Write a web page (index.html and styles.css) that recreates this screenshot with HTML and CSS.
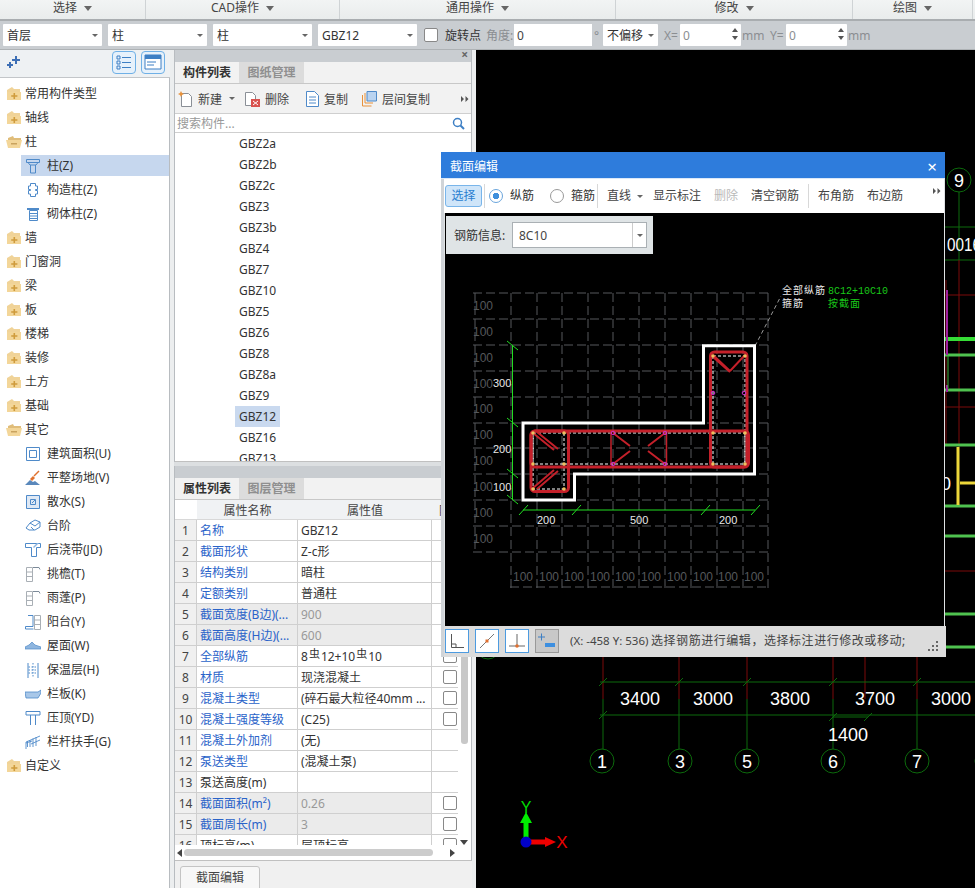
FILE: index.html
```html
<!DOCTYPE html>
<html lang="zh-CN">
<head>
<meta charset="utf-8">
<title>截面编辑</title>
<link rel="stylesheet" href="styles.css">
</head>
<body>
<svg class="defs" width="0" height="0" aria-hidden="true">
  <defs>
    <symbol id="folder" viewBox="0 0 16 16"><path d="M1 4l5-3 2 2h6v11H1z" fill="#f0d398"/><path d="M1 6h14v8H1z" fill="#f3d699"/><path d="M7.500 7h1.600v2.300h2.300v1.500H9.100v2.300H7.500v-2.300H5.200V9.300h2.300z" fill="#cf9b3c"/></symbol>
    <symbol id="folder-open" viewBox="0 0 16 16"><path d="M2 4l5-2 1 2h7v4H2z" fill="#e0bd7a"/><path d="M0 6h16l-2 8H2z" fill="#f3d699"/><path d="M5 9h6v1.500H5z" fill="#c9a35e"/></symbol>
    <symbol id="i-col" viewBox="0 0 16 16"><path d="M1.500 1.500h13v3h-13zM3 4.500l2 2.500h6l2-2.500M5.500 7v8h5V7" fill="none" stroke="#4f8ac9"/></symbol>
    <symbol id="i-gz" viewBox="0 0 16 16"><path d="M5.500 1.500h5v2.500h2v3.500h-2v1h2v3.500h-2v2.500h-5V12h-2V8.500h2v-1h-2V4h2z" fill="none" stroke="#4f8ac9"/></symbol>
    <symbol id="i-qt" viewBox="0 0 16 16"><path d="M2 2h12v2H2z" fill="#4f8ac9"/><path d="M4.500 4.500h8v10h-8zM4.500 7.500h8M4.500 10h8M4.500 12.500h8" fill="none" stroke="#4f8ac9"/></symbol>
    <symbol id="i-area" viewBox="0 0 16 16"><path d="M1.500 1.500h13v13h-13zM4.500 4.500h7v7h-7z" fill="none" stroke="#4f8ac9"/></symbol>
    <symbol id="i-site" viewBox="0 0 16 16"><path d="M0 15l5-5 3 2 2-1 5 4z" fill="#5a88bb"/><path d="M5 9l3-3 2 2-3 3z" fill="#e0712e"/><path d="M9 6l5-5" stroke="#e0712e" stroke-width="1.400"/></symbol>
    <symbol id="i-water" viewBox="0 0 16 16"><path d="M1.500 1.500h13v13h-13z" fill="#dfe9f5" stroke="#4f8ac9"/><path d="M5.500 5.500h5v5h-5zM10 6l-3 3" fill="none" stroke="#4f8ac9"/></symbol>
    <symbol id="i-step" viewBox="0 0 16 16"><path d="M1 10l4-5 5-3 5 2v5l-5 3H4zM5 5l5 3 5-4M6 9l3 3" fill="none" stroke="#4f8ac9"/></symbol>
    <symbol id="i-hj" viewBox="0 0 16 16"><path d="M.5 1.500h15v4h-4v9h-5v-9h-6z" fill="none" stroke="#4f8ac9"/><path d="M8 5l4-4h2L9 6z" fill="#8db5e0"/></symbol>
    <symbol id="i-eave" viewBox="0 0 16 16"><path d="M1.500 1.500h6v14h-6zM1.500 6h6M1.500 10.500h6" fill="none" stroke="#a9afb5"/><path d="M8 1.500h6l1 2" fill="none" stroke="#7c8a99"/></symbol>
    <symbol id="i-bal" viewBox="0 0 16 16"><path d="M9.500 1.500h6v14h-6zM9.500 6h6M9.500 10.500h6" fill="none" stroke="#a9afb5"/><path d="M3 1.500h5v11H.5v2.500h8" fill="none" stroke="#4f8ac9"/></symbol>
    <symbol id="i-roof" viewBox="0 0 16 16"><path d="M0 9l4-2 3-3 3 3 6 2v2H0z" fill="#8fb6df" stroke="#4f8ac9" stroke-width=".7"/></symbol>
    <symbol id="i-ins" viewBox="0 0 16 16"><path d="M3 1v15M13 1v15" stroke="#4f8ac9"/><path d="M8 1v15M3.500 5h9M3.500 8h9M3.500 11h9" stroke="#4f8ac9" stroke-dasharray="1.500 1.500"/></symbol>
    <symbol id="i-pan" viewBox="0 0 16 16"><path d="M0 6h13l3-2v3l-3 5H1z" fill="#a8c7e8" stroke="#4f8ac9" stroke-width=".8"/></symbol>
    <symbol id="i-top" viewBox="0 0 16 16"><path d="M1 1.500h14v3.500H1z" fill="none" stroke="#4f8ac9"/><path d="M5.500 5v10M10.500 5v10" stroke="#4f8ac9"/></symbol>
    <symbol id="i-rail" viewBox="0 0 16 16"><path d="M1 15V8l14-6M2.500 13V7M5 13V6M8 13V4.500M11 12V3M1 9l6-2M6 10l9-4" fill="none" stroke="#4f8ac9" stroke-width=".9"/></symbol>
    <symbol id="more-arrows" viewBox="0 0 8 8"><path d="M0 1l3 3-3 3zM4.500 1l3 3-3 3z" fill="#555"/></symbol>
  </defs>
</svg>

<div class="app">
  <nav class="menubar">
    <div class="menu-cell">选择<span class="caret"></span></div>
    <div class="menu-cell">CAD操作<span class="caret"></span></div>
    <div class="menu-cell">通用操作<span class="caret"></span></div>
    <div class="menu-cell">修改<span class="caret"></span></div>
    <div class="menu-cell">绘图<span class="caret"></span></div>
  </nav>

  <div class="toolbar">
    <div class="combo">首层<span class="caret small"></span></div>
    <div class="combo">柱<span class="caret small"></span></div>
    <div class="combo">柱<span class="caret small"></span></div>
    <div class="combo">GBZ12<span class="caret small"></span></div>
    <span class="check tool-check"></span>
    <span class="tool-label dark">旋转点</span>
    <span class="tool-label faded gap-angle">角度:</span>
    <div class="field angle">0</div>
    <span class="tool-label faded degree">°</span>
    <div class="combo offset">不偏移<span class="caret small"></span></div>
    <span class="tool-label faded gap-xy">X=</span>
    <div class="field spin faded">0<span class="spin-arrows"><i></i><i></i></span></div>
    <span class="tool-label faded gap-mm">mm</span>
    <span class="tool-label faded gap-xy2">Y=</span>
    <div class="field spin faded">0<span class="spin-arrows"><i></i><i></i></span></div>
    <span class="tool-label faded gap-mm">mm</span>
  </div>

  <main class="workspace">
    <aside class="tree-pane">
      <div class="tree-head">
        <svg class="spark" width="13" height="13" viewBox="0 0 13 13"><path d="M8 0h2v3h3v2h-3v3H8V5H5V3h3zM2 6h2v2h2v2H4v2H2v-2H0V8h2z" fill="#3d6fb5"/></svg>
        <span class="view-btns">
          <span class="view-btn"><svg width="16" height="16" viewBox="0 0 16 16"><path d="M1 2h3v3H1zM1 7h3v3H1zM1 12h3v3H1zM6 3.500h9M6 8.500h9M6 13.500h9" fill="none" stroke="#3d7fc4"/></svg></span>
          <span class="view-btn"><svg width="18" height="16" viewBox="0 0 18 16"><path d="M1 1h16v14H1z" fill="#fff" stroke="#3d7fc4"/><path d="M1 1h16v4H1z" fill="#3d7fc4"/><path d="M3 8h9M3 11h7" stroke="#3d7fc4"/></svg></span>
        </span>
      </div>
      <ul class="tree">
        <li class="node"><svg class="ficon"><use href="#folder"/></svg>常用构件类型</li>
        <li class="node"><svg class="ficon"><use href="#folder"/></svg>轴线</li>
        <li class="node"><svg class="ficon"><use href="#folder-open"/></svg>柱</li>
        <li class="leaf selected"><svg class="icon"><use href="#i-col"/></svg>柱(Z)</li>
        <li class="leaf"><svg class="icon"><use href="#i-gz"/></svg>构造柱(Z)</li>
        <li class="leaf"><svg class="icon"><use href="#i-qt"/></svg>砌体柱(Z)</li>
        <li class="node"><svg class="ficon"><use href="#folder"/></svg>墙</li>
        <li class="node"><svg class="ficon"><use href="#folder"/></svg>门窗洞</li>
        <li class="node"><svg class="ficon"><use href="#folder"/></svg>梁</li>
        <li class="node"><svg class="ficon"><use href="#folder"/></svg>板</li>
        <li class="node"><svg class="ficon"><use href="#folder"/></svg>楼梯</li>
        <li class="node"><svg class="ficon"><use href="#folder"/></svg>装修</li>
        <li class="node"><svg class="ficon"><use href="#folder"/></svg>土方</li>
        <li class="node"><svg class="ficon"><use href="#folder"/></svg>基础</li>
        <li class="node"><svg class="ficon"><use href="#folder-open"/></svg>其它</li>
        <li class="leaf"><svg class="icon"><use href="#i-area"/></svg>建筑面积(U)</li>
        <li class="leaf"><svg class="icon"><use href="#i-site"/></svg>平整场地(V)</li>
        <li class="leaf"><svg class="icon"><use href="#i-water"/></svg>散水(S)</li>
        <li class="leaf"><svg class="icon"><use href="#i-step"/></svg>台阶</li>
        <li class="leaf"><svg class="icon"><use href="#i-hj"/></svg>后浇带(JD)</li>
        <li class="leaf"><svg class="icon"><use href="#i-eave"/></svg>挑檐(T)</li>
        <li class="leaf"><svg class="icon"><use href="#i-eave"/></svg>雨蓬(P)</li>
        <li class="leaf"><svg class="icon"><use href="#i-bal"/></svg>阳台(Y)</li>
        <li class="leaf"><svg class="icon"><use href="#i-roof"/></svg>屋面(W)</li>
        <li class="leaf"><svg class="icon"><use href="#i-ins"/></svg>保温层(H)</li>
        <li class="leaf"><svg class="icon"><use href="#i-pan"/></svg>栏板(K)</li>
        <li class="leaf"><svg class="icon"><use href="#i-top"/></svg>压顶(YD)</li>
        <li class="leaf"><svg class="icon"><use href="#i-rail"/></svg>栏杆扶手(G)</li>
        <li class="node"><svg class="ficon"><use href="#folder"/></svg>自定义</li>
      </ul>
    </aside>

    <section class="side-pane">
      <div class="pane-top">
        <div class="strip"><span class="strip-x">×</span></div>
        <div class="tabs"><span class="tab active">构件列表</span><span class="tab">图纸管理</span></div>
        <div class="list-tools">
          <svg class="tool-icon" width="15" height="16" viewBox="0 0 15 16"><path d="M3.500 2.500h7l3 3v10h-10z" fill="#fff" stroke="#8a8f96"/><path d="M3 0l1 2 2 1-2 1-1 2-1-2-2-1 2-1z" fill="#e8913a"/></svg>
          <span class="lt lt-new">新建</span><span class="caret small lt-caret"></span>
          <svg class="tool-icon lt-del" width="15" height="16" viewBox="0 0 15 16"><path d="M.5 1.500h7l3 3v10H.5z" fill="#fff" stroke="#8a8f96"/><path d="M6 8h9v8H6z" fill="#d9534f"/><path d="M8 10l5 4M13 10l-5 4" stroke="#fff"/></svg>
          <span class="lt">删除</span>
          <svg class="tool-icon lt-copy" width="13" height="16" viewBox="0 0 13 16"><path d="M.5.500h8l4 4v11H.5z" fill="#fff" stroke="#4f8ac9"/><path d="M3 6h7M3 9h7M3 12h7" stroke="#4f8ac9"/></svg>
          <span class="lt">复制</span>
          <svg class="tool-icon lt-layer" width="15" height="16" viewBox="0 0 15 16"><path d="M.500 4v11h9" fill="none" stroke="#e8913a"/><path d="M3 2v10h8" fill="none" stroke="#e8913a"/><path d="M5 .500h9.500v9.500H5z" fill="#b9d3f0" stroke="#4f8ac9"/></svg>
          <span class="lt">层间复制</span>
          <svg class="more list-more" width="8" height="8"><use href="#more-arrows"/></svg>
        </div>
        <div class="search">
          <span>搜索构件...</span>
          <svg width="13" height="13" viewBox="0 0 13 13"><circle cx="5.500" cy="5.500" r="4" fill="none" stroke="#3d7fc4" stroke-width="1.500"/><path d="M8.500 8.500l3.500 3.500" stroke="#3d7fc4" stroke-width="2"/></svg>
        </div>
        <ul class="comp-list">
          <li>GBZ2a</li><li>GBZ2b</li><li>GBZ2c</li><li>GBZ3</li><li>GBZ3b</li><li>GBZ4</li><li>GBZ7</li><li>GBZ10</li>
          <li>GBZ5</li><li>GBZ6</li><li>GBZ8</li><li>GBZ8a</li><li>GBZ9</li><li class="picked">GBZ12</li><li>GBZ16</li><li>GBZ13</li>
        </ul>
      </div>

      <div class="splitter"></div>

      <div class="pane-bottom">
        <div class="strip"></div>
        <div class="tabs tabs-low"><span class="tab active">属性列表</span><span class="tab">图层管理</span></div>
        <div class="table-wrap">
          <table class="props">
            <colgroup><col class="c-num"><col class="c-name"><col class="c-val"><col class="c-chk"></colgroup>
            <thead><tr><th class="blank"></th><th>属性名称</th><th>属性值</th><th class="extra">附加</th></tr></thead>
            <tbody>
              <tr><td class="n">1</td><td class="k">名称</td><td>GBZ12</td><td></td></tr>
              <tr><td class="n">2</td><td class="k">截面形状</td><td>Z-c形</td><td></td></tr>
              <tr><td class="n">3</td><td class="k">结构类别</td><td>暗柱</td><td></td></tr>
              <tr><td class="n">4</td><td class="k">定额类别</td><td>普通柱</td><td></td></tr>
              <tr class="off"><td class="n">5</td><td class="k">截面宽度(B边)(...</td><td>900</td><td></td></tr>
              <tr class="off"><td class="n">6</td><td class="k">截面高度(H边)(...</td><td>600</td><td></td></tr>
              <tr><td class="n">7</td><td class="k">全部纵筋</td><td>8<span class="bar-sym">虫</span>12+10<span class="bar-sym">虫</span>10</td><td class="cc"><span class="check"></span></td></tr>
              <tr><td class="n">8</td><td class="k">材质</td><td>现浇混凝土</td><td class="cc"><span class="check"></span></td></tr>
              <tr><td class="n">9</td><td class="k">混凝土类型</td><td>(碎石最大粒径40mm ...</td><td class="cc"><span class="check"></span></td></tr>
              <tr><td class="n">10</td><td class="k">混凝土强度等级</td><td>(C25)</td><td class="cc"><span class="check"></span></td></tr>
              <tr><td class="n">11</td><td class="k">混凝土外加剂</td><td>(无)</td><td></td></tr>
              <tr><td class="n">12</td><td class="k">泵送类型</td><td>(混凝土泵)</td><td></td></tr>
              <tr><td class="n">13</td><td class="plain">泵送高度(m)</td><td></td><td></td></tr>
              <tr class="off"><td class="n">14</td><td class="k">截面面积(m²)</td><td>0.26</td><td class="cc"><span class="check"></span></td></tr>
              <tr class="off"><td class="n">15</td><td class="k">截面周长(m)</td><td>3</td><td class="cc"><span class="check"></span></td></tr>
              <tr><td class="n">16</td><td class="plain">顶标高(m)</td><td>层顶标高</td><td class="cc"><span class="check"></span></td></tr>
            </tbody>
          </table>
          <div class="vthumb"></div>
          <span class="vdown"></span>
        </div>
        <div class="hscroll"><span class="h-left"></span><span class="hthumb"></span><span class="h-right"></span></div>
        <div class="pane-actions"><span class="action-btn">截面编辑</span></div>
      </div>
    </section>

    <section class="canvas">
      <svg class="cad" width="499" height="838" viewBox="476 50 499 838">
        <!-- right side fragments of the plan -->
        <path d="M945 227H975M945 260H975" stroke="#0c6a0c"/>
        <path d="M959 192V260" stroke="#0c6a0c"/>
        <path d="M959 260V447M946 280V445M945 295H975M945 407H975M945 571H975" stroke="#7d0a0a"/>
        <path d="M945 339H975" stroke="#36dd36" stroke-width="4"/>
        <path d="M945 355H975M945 390H975M945 445H975M945 506H975M945 536H975M945 614H975M945 647H975" stroke="#4fc24f" stroke-width="3"/>
        <path d="M947 290V355M947 385V392" stroke="#a020a0" stroke-width="2"/>
        <path d="M948 355V388" stroke="#3db03d"/>
        <path d="M958 447V505M960 483H975" stroke="#ecd63a" stroke-width="3"/>
        <circle cx="959" cy="180" r="12" fill="none" stroke="#0c6a0c"/>
        <text class="cad-big" x="959" y="187" text-anchor="middle">9</text>
        <text class="cad-big" x="947" y="251" textLength="34" lengthAdjust="spacingAndGlyphs">0016</text>
        <text class="cad-big" x="941" y="490">0</text>

        <!-- column grid lines below the dialog -->
        <path d="M603 657V699M679 657V699M747 657V699M833 657V699M865 657V699M917 657V699" stroke="#7d0a0a"/>
        <path d="M603 699V749M679 699V749M747 699V749M833 699V749M917 699V749" stroke="#0c6a0c"/>
        <path d="M600 682H975M600 715H975M833 717H868" stroke="#0c6a0c"/>
        <path d="M599 686l8-8M675 686l8-8M743 686l8-8M829 686l8-8M913 686l8-8M599 719l8-8M829 721l8-8M864 721l8-8" stroke="#0c6a0c"/>
        <g class="cad-big">
          <text x="640" y="705" text-anchor="middle">3400</text>
          <text x="713" y="705" text-anchor="middle">3000</text>
          <text x="790" y="705" text-anchor="middle">3800</text>
          <text x="875" y="705" text-anchor="middle">3700</text>
          <text x="951" y="705" text-anchor="middle">3000</text>
          <text x="848" y="741" text-anchor="middle">1400</text>
        </g>
        <g fill="none" stroke="#0c6a0c">
          <circle cx="602" cy="761" r="12"/><circle cx="680" cy="761" r="12"/><circle cx="747" cy="761" r="12"/><circle cx="833" cy="761" r="12"/><circle cx="917" cy="761" r="12"/><circle cx="987" cy="761" r="12"/><circle cx="488" cy="647" r="12"/>
        </g>
        <g class="cad-big">
          <text x="602" y="768" text-anchor="middle">1</text>
          <text x="680" y="768" text-anchor="middle">3</text>
          <text x="747" y="768" text-anchor="middle">5</text>
          <text x="833" y="768" text-anchor="middle">6</text>
          <text x="917" y="768" text-anchor="middle">7</text>
        </g>

        <!-- UCS -->
        <path d="M526 842V822" stroke="#00ee00" stroke-width="5"/>
        <path d="M526 812l6 11h-12z" fill="#00ee00"/>
        <path d="M526 842H546" stroke="#ee0000" stroke-width="5"/>
        <path d="M556 842l-11-5v10z" fill="#ee0000"/>
        <circle cx="526" cy="842" r="5.500" fill="#0000c8"/>
        <text class="ucs-y" x="526" y="813" text-anchor="middle">Y</text>
        <text class="ucs-x" x="562" y="848" text-anchor="middle">X</text>
      </svg>
    </section>
  </main>

  <div class="dialog">
    <header class="dlg-title"><span>截面编辑</span><span class="dlg-close">×</span></header>
    <div class="dlg-tools">
      <span class="sel-btn">选择</span>
      <span class="dlg-sep"></span>
      <span class="radio on first"><i></i>纵筋</span>
      <span class="radio second"><i></i>箍筋</span>
      <span class="dlg-sep s2"></span>
      <span class="dt line">直线<span class="caret small"></span></span>
      <span class="dt">显示标注</span>
      <span class="dt gray">删除</span>
      <span class="dt">清空钢筋</span>
      <span class="dlg-sep s3"></span>
      <span class="dt lead">布角筋</span>
      <span class="dt">布边筋</span>
      <svg class="more dlg-more" width="8" height="8"><use href="#more-arrows"/></svg>
    </div>
    <div class="dlg-body">
      <svg class="drawing" width="499" height="412" viewBox="445 213 499 412">
        <path class="grid" d="M473 293H768M473 319H768M473 345H768M473 371H768M473 397H768M473 423H768M473 448H768M473 474H768M473 500H768M473 526H768M473 552H768M510 587H768"/>
        <path class="grid" d="M511 293V590M537 293V590M562 293V590M588 293V590M613 293V590M639 293V590M665 293V590M691 293V590M717 293V590M743 293V590M768 293V590M475 293V552"/>
        <g class="grid-text">
          <text x="473" y="310">100</text><text x="473" y="336">100</text><text x="473" y="362">100</text><text x="473" y="388">100</text><text x="473" y="413">100</text><text x="473" y="439">100</text><text x="473" y="465">100</text><text x="473" y="491">100</text><text x="473" y="517">100</text><text x="473" y="543">100</text>
          <text x="513" y="581">100</text><text x="539" y="581">100</text><text x="564" y="581">100</text><text x="590" y="581">100</text><text x="615" y="581">100</text><text x="641" y="581">100</text><text x="667" y="581">100</text><text x="693" y="581">100</text><text x="718" y="581">100</text><text x="744" y="581">100</text>
        </g>
        <!-- leader -->
        <path class="leader" d="M755 346L781 296"/>
        <text class="note" x="782" y="294">全部纵筋</text>
        <text class="note" x="782" y="307">箍筋</text>
        <text class="note-g" x="828" y="294">8C12+10C10</text>
        <text class="note-h" x="828" y="307">按截面</text>
        <!-- dimensions -->
        <path class="dim" d="M512.500 345V500M523 510H755"/>
        <path class="dim" d="M507 341l11 9M507 418l11 9M507 469l11 9M507 495l11 9M519 515l9-10M572 515l9-10M701 515l9-10M751 515l9-10"/>
        <g class="dim-text">
          <text x="493" y="387">300</text><text x="493" y="453">200</text><text x="493" y="491">100</text>
          <text x="537" y="524">200</text><text x="630" y="524">500</text><text x="719" y="524">200</text>
        </g>
        <!-- section outline -->
        <path class="outline" d="M523 423H703.500V345.700H754.500V474H574.500V500H523Z"/>
        <!-- ties below hoops -->
        <path class="tie" d="M533 433H745V464H533ZM533 433V489H564V433M713 356H745V464M713 356V464"/>
        <!-- hoops -->
        <path class="thin" d="M611 432V465M666.500 432V465"/>
        <g class="hoop">
          <rect x="531" y="431" width="217.500" height="36" rx="4"/>
          <rect x="531" y="431" width="37.500" height="60.500" rx="4"/>
          <rect x="710.500" y="352" width="36.500" height="115" rx="4"/>
        </g>
        <g class="hook">
          <path d="M533 433l21 17M537 432l21 17M533 488l21-18M537 489l21-18"/>
          <path d="M713 355l17 16M713 357l17 15M745 355l-15 16"/>
          <path d="M613 433l17 13M613 464l17-13M665 433l-17 13M665 464l-17-13"/>
        </g>
        <g fill="#f0c060">
          <circle cx="533" cy="433" r="1.800"/><circle cx="564" cy="433" r="1.800"/><circle cx="533" cy="464" r="1.800"/><circle cx="564" cy="464" r="1.800"/><circle cx="533" cy="489" r="1.800"/><circle cx="564" cy="489" r="1.800"/><circle cx="713" cy="356" r="1.800"/><circle cx="745" cy="356" r="1.800"/><circle cx="713" cy="433" r="1.800"/><circle cx="745" cy="433" r="1.800"/><circle cx="713" cy="464" r="1.800"/><circle cx="745" cy="464" r="1.800"/>
        </g>
        <g fill="none" stroke="#d030d0">
          <circle cx="613" cy="433" r="1.800"/><circle cx="665" cy="433" r="1.800"/><circle cx="613" cy="464" r="1.800"/><circle cx="665" cy="464" r="1.800"/><circle cx="713" cy="393" r="1.800"/><circle cx="744" cy="393" r="1.800"/>
        </g>
      </svg>
      <div class="rebar-info">
        <span class="rebar-label">钢筋信息:</span>
        <div class="rebar-combo"><span>8C10</span><span class="rebar-drop"><span class="caret small"></span></span></div>
      </div>
    </div>
    <footer class="dlg-status">
      <span class="snap"><svg width="20" height="20" viewBox="0 0 20 20"><path d="M4.500 3V16.500H17M4.500 13H9V16.500" fill="none" stroke="#555"/></svg></span>
      <span class="snap"><svg width="20" height="20" viewBox="0 0 20 20"><path d="M3 17L17 3" stroke="#777"/><rect x="8.500" y="8.500" width="3" height="3" fill="#e07030"/></svg></span>
      <span class="snap"><svg width="20" height="20" viewBox="0 0 20 20"><path d="M10 3V15M2 15H18" stroke="#666"/><circle cx="10" cy="15" r="1.800" fill="#e07030"/></svg></span>
      <span class="snap pressed"><svg width="20" height="20" viewBox="0 0 20 20"><path d="M1 6h7M4.500 2.500v7" stroke="#3d7fc4"/><path d="M8 12h10v4H8z" fill="#3d8fe0"/></svg></span>
      <span class="status-pos">(X: -458 Y: 536)</span>
      <span class="status-text">选择钢筋进行编辑，选择标注进行修改或移动;</span>
      <svg class="grip" width="12" height="12" viewBox="0 0 12 12"><path d="M9 1h2v2H9zM5 5h2v2H5zM9 5h2v2H9zM1 9h2v2H1zM5 9h2v2H5zM9 9h2v2H9z" fill="#666"/></svg>
    </footer>
  </div>
</div>
</body>
</html>
```

FILE: styles.css
```css
* { box-sizing: border-box; }
html, body { margin: 0; padding: 0; }
body {
  font-family: "Noto Sans", "Noto Sans CJK SC", sans-serif;
  font-size: 12px;
  line-height: 16px;
  color: #333;
  background: #000;
}
ul { list-style: none; margin: 0; padding: 0; }
.defs { position: absolute; }
.app { position: relative; width: 975px; height: 888px; overflow: hidden; display: flex; flex-direction: column; }

.caret { display: inline-block; width: 0; height: 0; border-left: 4px solid transparent; border-right: 4px solid transparent; border-top: 5px solid #666; margin-left: 7px; vertical-align: 1px; }
.caret.small { border-left-width: 3px; border-right-width: 3px; border-top-width: 3px; vertical-align: 2px; }

/* menu */
.menubar { height: 21px; display: grid; grid-template-columns: 146px 194px 276px 237px 120px 2px; background: linear-gradient(#f2f4f4, #e9ecec); border-bottom: 2px solid #a9adb0; flex: none; }
.menu-cell { border-right: 1px solid #cfd3d5; text-align: center; line-height: 16px; color: #444; }

/* toolbar */
.toolbar { height: 29px; flex: none; background: #c9cdd1; display: flex; align-items: center; padding-left: 3px; border-bottom: 1px solid #aeb2b5; }
.combo { position: relative; width: 99px; height: 22px; background: #fff; border-radius: 1px; line-height: 23px; padding-left: 4px; margin-right: 6px; }
.combo .caret { position: absolute; right: 4px; top: 10px; margin: 0; }
.offset { width: 55px; margin: 0; }
.check { display: inline-block; width: 14px; height: 14px; background: #fff; border: 1px solid #888; border-radius: 2px; }
.tool-check { margin-left: 1px; margin-right: 7px; }
.tool-label { white-space: nowrap; padding-top: 2px; }
.dark { color: #333; }
.faded { color: #8b8e91; }
.gap-angle { margin-left: 5px; width: 28px; }
.field { position: relative; height: 22px; line-height: 23px; background: #fff; padding-left: 3px; }
.angle { width: 78px; color: #444; }
.degree { width: 9px; margin-left: 2px; }
.gap-xy { margin-left: 6px; width: 16px; }
.gap-xy2 { margin-left: 6px; width: 16px; }
.gap-mm { width: 22px; margin-left: 1px; }
.spin { width: 61px; border-radius: 1px; }
.spin-arrows { position: absolute; right: 3px; top: 4px; display: flex; flex-direction: column; gap: 4px; }
.spin-arrows i { display: block; width: 0; height: 0; border-left: 3px solid transparent; border-right: 3px solid transparent; border-bottom: 4px solid #555; }
.spin-arrows i + i { border-bottom: 0; border-top: 4px solid #555; }

/* layout */
.workspace { flex: 1; display: flex; min-height: 0; }
.tree-pane { width: 174px; flex: none; background: #fff; border-right: 4px solid #eceeef; box-shadow: inset -1px 0 0 #b8bcc0; display: flex; flex-direction: column; }
.tree-head { height: 28px; flex: none; background: #eef1f3; border-bottom: 1px solid #c3c6c9; display: flex; align-items: center; justify-content: space-between; padding: 0 5px 3px 7px; }
.view-btns { display: flex; gap: 5px; }
.view-btn { width: 24px; height: 23px; display: flex; align-items: center; justify-content: center; background: #e6f1fb; border: 1px solid #6fb0e6; border-radius: 4px; }
.tree { padding-top: 5px; }
.node, .leaf { height: 24px; line-height: 21px; display: flex; align-items: center; white-space: nowrap; color: #333; padding-bottom: 3px; }
.node { padding-left: 6px; }
.leaf { margin-left: 21px; margin-right: 1px; padding-left: 4px; }
.ficon { width: 16px; height: 16px; margin-right: 3px; flex: none; }
.icon { width: 16px; height: 16px; margin-right: 6px; flex: none; }
.leaf.selected { background: linear-gradient(#c6d7ee, #c6d7ee) 0 0 / 100% 21px no-repeat; }

/* side pane */
.side-pane { width: 302px; flex: none; display: flex; flex-direction: column; background: #f2f2f2; border-right: 4px solid #eceeef; }
.pane-top { height: 412px; flex: none; display: flex; flex-direction: column; border: solid #b8bcc0; border-width: 0 1px; }
.pane-bottom { flex: 1; min-height: 0; display: flex; flex-direction: column; border-left: 1px solid #b8bcc0; }
.strip { height: 12px; flex: none; background: #c9cdd1; position: relative; }
.strip-x { position: absolute; right: 3px; top: -2px; color: #666; font-size: 12px; font-weight: 700; line-height: 14px; }
.tabs { height: 22px; flex: none; display: flex; background: #f2f2f2; border-bottom: 1px solid #c8c8c8; }
.tab { width: 65px; text-align: center; line-height: 21px; background: #dcdcdc; color: #8f8f8f; font-weight: 700; }
.tab.active { background: #f2f2f2; color: #333; width: 64px; }
.list-tools { height: 30px; flex: none; display: flex; align-items: center; padding-left: 3px; border-bottom: 1px solid #cfcfcf; position: relative; }
.tool-icon { flex: none; }
.lt { color: #444; white-space: nowrap; margin-left: 5px; padding-top: 2px; }
.lt-new { margin-left: 5px; }
.lt-caret { margin-left: 7px; }
.lt-del { margin-left: 10px; }
.lt-copy { margin-left: 17px; }
.lt-layer { margin-left: 14px; }
.list-more { position: absolute; right: 2px; top: 11px; }
.search { height: 19px; flex: none; display: flex; align-items: center; justify-content: space-between; padding: 1px 6px 0 2px; background: #fff; color: #999; border-bottom: 1px solid #cfcfcf; }
.comp-list { flex: 1; min-height: 0; overflow: hidden; background: #fff; padding-left: 60px; border-bottom: 1px solid #c0c0c0; }
.comp-list li { height: 21px; line-height: 22px; padding: 0 4px; width: max-content; color: #333; }
.comp-list li.picked { background: #c9d9ef; }
.splitter { height: 4px; flex: none; background: #dcdfe1; }

/* table */
.table-wrap { height: 345px; flex: none; position: relative; overflow: hidden; background: #fff; border-right: 1px solid #b8bcc0; }
.props { border-collapse: separate; border-spacing: 0; table-layout: fixed; width: 283px; }
.c-num { width: 22px; } .c-name { width: 101px; } .c-val { width: 134px; } .c-chk { width: 26px; }
.props th { height: 20px; font-weight: 400; background: #f0f2f4; color: #444; border-bottom: 1px solid #d8d8d8; padding: 2px 0 0; overflow: hidden; white-space: nowrap; }
.props th.blank { background: #fff; }
.props th.extra { text-align: left; padding-left: 7px; }
.props td { height: 21px; padding: 2px 0 0 3px; border-bottom: 1px solid #cfcfcf; border-right: 1px solid #cfcfcf; white-space: nowrap; overflow: hidden; }
.props td:last-child { border-right: 0; }
.props td.n { background: #f0f0f0; text-align: center; padding: 2px 0 0; color: #444; }
.props td.k { color: #2a63c9; }
.props td.plain { color: #333; }
.props td.cc { text-align: left; padding: 0 0 0 11px; }
.props td.cc .check { display: block; }
.props tr.off td:nth-child(2), .props tr.off td:nth-child(3) { background: #ebebeb; }
.props tr.off td:nth-child(3) { color: #999; }
.bar-sym { font-size: 11px; position: relative; top: -3px; padding: 0 1px; }
.vthumb { position: absolute; left: 286px; top: 0; width: 7px; height: 244px; background: #c8c8c8; border-radius: 3px; }
.vdown { position: absolute; left: 285px; bottom: 0; width: 0; height: 0; border-left: 4px solid transparent; border-right: 4px solid transparent; border-top: 5px solid #444; }
.hscroll { height: 16px; flex: none; background: #fff; border-bottom: 1px solid #c0c0c0; border-right: 1px solid #b8bcc0; display: flex; align-items: center; padding-left: 2px; }
.h-left { width: 0; height: 0; border-top: 4px solid transparent; border-bottom: 4px solid transparent; border-right: 5px solid #444; }
.hthumb { width: 249px; height: 7px; margin-left: 2px; background: #ccc; border-radius: 4px; }
.h-right { width: 0; height: 0; margin-left: 17px; border-top: 4px solid transparent; border-bottom: 4px solid transparent; border-left: 5px solid #444; }
.pane-actions { flex: 1; min-height: 0; padding: 5px 0 0 5px; background: #f0f0f0; }
.action-btn { display: block; width: 80px; height: 24px; background: #f7f7f7; border: 1px solid #c4c4c4; border-radius: 3px 3px 0 0; text-align: center; line-height: 22px; color: #444; }

/* canvas */
.canvas { flex: 1; min-width: 0; background: #000; }
.cad { display: block; }
.cad-big { font-family: "Liberation Sans", sans-serif; font-size: 18px; fill: #fff; }
.ucs-y { font-family: "Liberation Sans", sans-serif; font-size: 16px; fill: #00dd00; }
.ucs-x { font-family: "Liberation Sans", sans-serif; font-size: 17px; fill: #ee0000; }

/* dialog */
.dialog { position: absolute; left: 441px; top: 152px; width: 504px; height: 505px; display: flex; flex-direction: column; background: #dfe2e4; border-left: 3px solid #d0d4d8; }
.dlg-title { height: 27px; flex: none; margin-left: -3px; background: #2e7cdc; color: #fff; display: flex; align-items: center; justify-content: space-between; padding: 4px 8px 0 9px; border-bottom: 1px solid #dbe8f8; }
.dlg-close { font-size: 17px; line-height: 16px; color: #fff; }
.dlg-tools { height: 34px; flex: none; background: #fff; display: flex; align-items: center; padding-left: 1px; position: relative; margin-right: 1px; white-space: nowrap; }
.sel-btn { width: 37px; height: 22px; line-height: 20px; text-align: center; color: #2a7ed0; background: #cfe5f9; border: 1px solid #79b5ea; border-radius: 3px; }
.dlg-sep { width: 1px; height: 24px; background: #d8d8d8; margin-left: 2px; }
.dlg-sep.s3 { margin-left: 9px; }
.radio { display: flex; align-items: center; gap: 7px; color: #333; }
.radio i { display: block; width: 14px; height: 14px; border: 1px solid #999; border-radius: 50%; background: #fff; }
.radio.on i { border-color: #6aa5dc; background: radial-gradient(circle, #3f8fdc 0 3px, #fff 3.500px); }
.radio.first { margin-left: 4px; }
.radio.second { margin-left: 16px; }
.dt { margin-left: 13px; color: #444; }
.dt.line { margin-left: 9px; margin-right: 10px; }
.dt.line + .dt { margin-left: 0; }
.dt.line .caret { margin-left: 6px; }
.dt.gray { color: #b9b9b9; }
.dt.lead { margin-left: 9px; }
.dlg-more { position: absolute; right: 3px; top: 8px; }
.dlg-body { flex: 1; min-height: 0; position: relative; background: #000; margin-left: 1px; margin-right: 1px; overflow: hidden; }
.drawing { display: block; }
.rebar-info { position: absolute; left: 1px; top: 3px; width: 207px; height: 38px; background: #dfe4e6; display: flex; align-items: center; padding-left: 8px; }
.rebar-label { width: 58px; color: #333; padding-top: 1px; }
.rebar-combo { width: 135px; height: 26px; display: flex; justify-content: space-between; align-items: stretch; background: #fff; border: 1px solid #aab0b4; padding: 1px 0 0 6px; line-height: 24px; color: #444; }
.rebar-drop { width: 14px; margin-top: -1px; border-left: 1px solid #ccc; display: flex; align-items: center; justify-content: center; }
.rebar-drop .caret { margin: 0; }
.grid { fill: none; stroke: #57595c; stroke-width: 1; stroke-dasharray: 9 4; }
.grid-text text { font-family: "Liberation Sans", sans-serif; font-size: 12px; fill: #55585b; }
.leader { stroke: #9a9a9a; stroke-dasharray: 4 3; fill: none; }
.note { font-family: "Noto Sans CJK SC", sans-serif; font-size: 10px; letter-spacing: 1px; fill: #e8e8e8; }
.note-g { font-family: "Liberation Mono", monospace; font-size: 10px; fill: #19c819; }
.note-h { font-family: "Noto Sans CJK SC", sans-serif; font-size: 10px; letter-spacing: 1px; fill: #19c819; }
.dim { stroke: #22dd22; fill: none; }
.dim-text text { font-family: "Liberation Sans", sans-serif; font-size: 11px; fill: #e8e8e8; }
.outline { fill: none; stroke: #fff; stroke-width: 3; }
.hoop rect { fill: none; stroke: #c4202a; stroke-width: 3; }
.hook path { fill: none; stroke: #c4202a; stroke-width: 2; }
.thin { stroke: #c4202a; stroke-width: 1.500; fill: none; }
.tie { fill: none; stroke: #fff; stroke-width: 1; stroke-dasharray: 3 2; }
.dlg-status { height: 31px; flex: none; margin-right: -1px; background: #dcdcdc; display: flex; align-items: center; padding: 0 0 2px 1px; gap: 6px; position: relative; color: #444; }
.snap { width: 24px; height: 24px; display: flex; align-items: center; justify-content: center; background: #fff; border: 1px solid #4d9be0; }
.snap.pressed { background: #c8c8c8; border-color: #999; }
.status-pos { width: 75px; margin-left: 5px; font-size: 11.500px; white-space: nowrap; }
.status-text { margin-left: 0; letter-spacing: .55px; white-space: nowrap; }
.grip { position: absolute; right: 7px; bottom: 5px; }
```
